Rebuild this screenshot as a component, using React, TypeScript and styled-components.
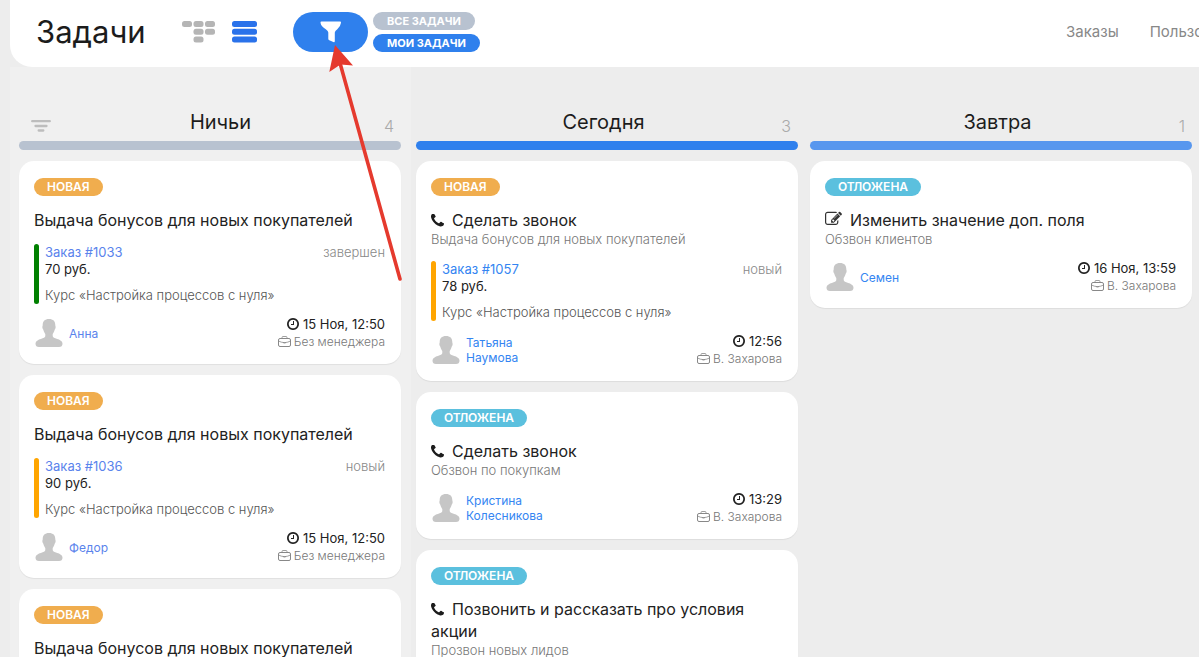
import React from 'react';
import styled, { createGlobalStyle } from 'styled-components';

const GlobalStyle = createGlobalStyle`
  * { box-sizing: border-box; }
  body {
    margin: 0;
    background: #ededed;
    color: #222;
    font-family: Inter, "Liberation Sans", sans-serif;
  }
  button { font: inherit; border: 0; padding: 0; cursor: pointer; background: none; }
  a { text-decoration: none; }
  h1, h2, h3, p { margin: 0; font-weight: 400; }
`;

const Page = styled.div`
  height: 100vh;
  overflow: hidden;
  position: relative;
  padding-left: 10px;
  display: flex;
  flex-direction: column;
`;

const Header = styled.header`
  flex: none;
  height: 67px;
  padding: 0 0 3px 26px;
  background: #fff;
  border-bottom-left-radius: 22px;
  display: flex;
  align-items: center;
  overflow: hidden;
`;

const PageTitle = styled.h1`
  width: 146px;
  font-size: 31px;
  line-height: 40px;
  color: #1c1c1c;
`;

const IconButton = styled.button<{ $gap: number }>`
  display: flex;
  margin-right: ${(p) => p.$gap}px;
`;

const FilterButton = styled.button`
  width: 75px;
  height: 40px;
  margin-right: 5px;
  border-radius: 20px;
  background: #2f80ed;
  display: flex;
  align-items: center;
  justify-content: center;
`;

const Scopes = styled.div`
  display: flex;
  flex-direction: column;
  align-items: flex-start;
  gap: 4px;
`;

const Scope = styled.button<{ $active?: boolean }>`
  height: 18px;
  padding: 0 14px;
  border-radius: 9px;
  background: ${(p) => (p.$active ? '#2f80ed' : '#b8c2d0')};
  color: #fff;
  font-size: 11px;
  font-weight: 700;
  line-height: 18px;
  white-space: nowrap;
`;

const Nav = styled.nav`
  flex: none;
  width: 133px;
  margin-left: auto;
  display: flex;
  gap: 31px;
  overflow: hidden;
`;

const NavLink = styled.a`
  flex: none;
  color: #888;
  font-size: 15px;
  line-height: 20px;
`;

const Board = styled.main`
  flex: 1;
  min-height: 0;
  display: flex;
`;

const Column = styled.section<{ $pad: string; $tint?: boolean }>`
  box-sizing: content-box;
  flex: 1 1 0;
  min-width: 0;
  padding: 0 ${(p) => p.$pad};
  background: ${(p) => (p.$tint ? '#f0f0f0' : 'transparent')};
`;

const ColumnHead = styled.header<{ $sortable?: boolean }>`
  height: 74px;
  padding: 0 7px 5px 12px;
  display: grid;
  grid-template-columns: ${(p) => (p.$sortable ? 44 : 16)}px 1fr 28px;
  align-items: end;
`;

const SortButton = styled.button`
  display: flex;
  padding-bottom: 4px;
`;

const ColumnTitle = styled.h2`
  grid-column: 2;
  font-size: 20px;
  line-height: 28px;
  text-align: center;
  color: #1c1c1c;
`;

const Count = styled.span`
  font-size: 16px;
  font-weight: 300;
  line-height: 20px;
  text-align: right;
  color: #aaa;
`;

const Rule = styled.div<{ $color: string }>`
  height: 9px;
  margin-bottom: 11px;
  border-radius: 5px;
  background: ${(p) => p.$color};
`;

const Cards = styled.div`
  display: flex;
  flex-direction: column;
  gap: 11px;
`;

const Card = styled.article`
  padding: 17px 16px 14px 15px;
  border-radius: 15px;
  background: #fff;
  box-shadow: 0 1px 1px rgba(0, 0, 0, 0.07);
`;

const Badge = styled.span<{ $color: string }>`
  display: block;
  width: fit-content;
  padding: 0 13px;
  margin-bottom: 13px;
  border-radius: 9px;
  background: ${(p) => p.$color};
  color: #fff;
  font-size: 12px;
  font-weight: 600;
  line-height: 18px;
`;

const CardTitle = styled.h3`
  font-size: 16px;
  line-height: 22px;
  color: #222;
  svg { margin-right: 8px; vertical-align: -1px; }
`;

const Subtitle = styled.p`
  font-size: 13px;
  font-weight: 300;
  line-height: 17px;
  color: #777;
`;

const Order = styled.div<{ $color: string }>`
  position: relative;
  margin-top: 13px;
  padding-left: 11px;
  height: 60px;
  &::before {
    content: '';
    position: absolute;
    left: 0;
    top: 0;
    bottom: 0;
    width: 5px;
    border-radius: 3px;
    background: ${(p) => p.$color};
  }
`;

const OrderTop = styled.div`
  display: flex;
  justify-content: space-between;
  font-size: 13px;
  line-height: 17px;
`;

const Link = styled.a<{ $soft?: boolean }>`
  color: ${(p) => (p.$soft ? '#5a83ec' : '#3485f2')};
`;

const Status = styled.span`
  font-weight: 300;
  color: #888;
`;

const Price = styled.p`
  margin-bottom: 9px;
  font-size: 13px;
  line-height: 17px;
`;

const Course = styled.p`
  font-size: 13px;
  font-weight: 300;
  line-height: 17px;
  color: #555;
`;

const Footer = styled.footer`
  margin-top: 12px;
  display: flex;
  align-items: center;
  justify-content: space-between;
`;

const Person = styled.div`
  display: flex;
  align-items: center;
  gap: 6px;
  padding-left: 1px;
  font-size: 12px;
  line-height: 15px;
  a { max-width: 90px; }
`;

const Meta = styled.div`
  text-align: right;
  font-size: 13px;
  line-height: 17px;
  svg { vertical-align: -1px; margin-right: 4px; }
`;

const Manager = styled.div`
  font-size: 12px;
  font-weight: 300;
  color: #777;
  svg { margin-right: 3px; }
`;

const Pointer = styled.svg`
  position: absolute;
  left: 320px;
  top: 40px;
  pointer-events: none;
`;

const PhoneIcon = () => (
  <svg width="13" height="13" viewBox="192 192 1408 1408" fill="#1c1c1c" aria-hidden="true">
    <path d="M1600 1240q0 27-10 70.5t-21 68.5q-21 50-122 106-94 51-186 51-27 0-53-3.5t-57-12.5-47-14.5-55.5-20.5-49.5-18q-98-35-175-83-127-79-264-216t-216-264q-48-77-83-175-3-9-18-49.5t-20.5-55.5-14.5-47-12.5-57-3.5-53q0-92 51-186 56-101 106-122 25-11 68.5-21t70.5-10q14 0 21 3 18 6 53 76 11 19 30 54t35 63.5 31 53.5q3 4 17.5 25t21.5 35.5 7 28.5q0 20-28.5 50t-62 55-62 53-28.5 46q0 9 5 22.5t8.5 20.5 14 24 11.5 19q76 137 174 235t235 174q2 1 19 11.5t24 14 20.5 8.5 22.5 5q18 0 46-28.5t53-62 55-62 50-28.5q14 0 28.5 7t35.5 21.5 25 17.5q25 15 53.5 31t63.5 35 54 30q70 35 76 53 3 7 3 21z" />
  </svg>
);

const EditIcon = () => (
  <svg width="17" height="16" viewBox="0 64 1792 1664" fill="#333" aria-hidden="true">
    <path d="M888 1184l116-116-152-152-116 116v56h96v96h56zm440-720q-16-16-33 1l-350 350q-17 17-1 33t33-1l350-350q17-17 1-33zm80 594v190q0 119-84.5 203.5t-203.5 84.5h-832q-119 0-203.5-84.5t-84.5-203.5v-832q0-119 84.5-203.5t203.5-84.5h832q63 0 117 25 15 7 18 23 3 17-9 29l-49 49q-14 14-32 8-23-6-45-6h-832q-66 0-113 47t-47 113v832q0 66 47 113t113 47h832q66 0 113-47t47-113v-126q0-13 9-22l64-64q15-15 35-7t20 29zm-96-738l288 288-672 672h-288v-288zm444 132l-92 92-288-288 92-92q28-28 68-28t68 28l152 152q28 28 28 68t-28 68z" />
  </svg>
);

const ClockIcon = () => (
  <svg width="12" height="12" viewBox="128 128 1536 1536" fill="#222" aria-hidden="true">
    <path d="M1024 544v448q0 14-9 23t-23 9h-320q-14 0-23-9t-9-23v-64q0-14 9-23t23-9h224v-352q0-14 9-23t23-9h64q14 0 23 9t9 23zm416 352q0-148-73-273t-198-198-273-73-273 73-198 198-73 273 73 273 198 198 273 73 273-73 198-198 73-273zm224 0q0 209-103 385.5t-279.5 279.5-385.5 103-385.5-103-279.5-279.5-103-385.5 103-385.5 279.5-279.5 385.5-103 385.5 103 279.5 279.5 103 385.5z" />
  </svg>
);

const CaseIcon = () => (
  <svg width="13" height="11" viewBox="0 0 13 11" fill="none" stroke="#888" aria-hidden="true">
    <rect x="0.5" y="2.5" width="12" height="8" rx="1.5" />
    <path d="M4 2.5V1.5q0-1 1-1h3q1 0 1 1v1M0.5 5q3 1.5 5 1.5h2q2 0 5-1.5M5.5 6v1h2V6" strokeWidth="0.8" />
  </svg>
);

const Avatar = () => (
  <svg width="28" height="28" viewBox="0 0 28 28" fill="#c6c6c6" aria-hidden="true">
    <path d="M14 0c4.200 0 6.300 2.200 6.300 6 0 1 .5 1.300.3 2.700-.2 1.200-.8 1.300-1 2.300-.4 2-1.300 3-1.900 3.900v2c0 1.300 1.300 1.900 3.300 2.600 3 1 6.500 2.300 6.500 5.200 0 2-1.200 3.300-3.500 3.300H4C1.700 28 .5 26.700.5 24.700c0-2.900 3.500-4.200 6.500-5.200 2-.7 3.300-1.300 3.300-2.600v-2c-.6-.9-1.500-1.900-1.900-3.900-.2-1-.8-1.100-1-2.300-.2-1.400.3-1.700.3-2.700 0-3.800 2.100-6 6.300-6z" />
  </svg>
);

const KanbanIcon = () => (
  <svg width="33" height="22" viewBox="0 0 33 22" fill="#b5b5b5" aria-hidden="true">
    <rect x="0" y="0" width="10" height="6" rx="2.500" />
    <rect x="11.500" y="0" width="10" height="6" rx="2.500" />
    <rect x="23" y="0" width="10" height="6" rx="2.500" />
    <rect x="11.500" y="7.800" width="10" height="6" rx="2.500" />
    <rect x="23" y="7.800" width="10" height="6" rx="2.500" />
    <rect x="11.500" y="15.500" width="10" height="6" rx="2.500" />
  </svg>
);

const ListIcon = () => (
  <svg width="25" height="22" viewBox="0 0 25 22" fill="#2a72ea" aria-hidden="true">
    <rect y="0" width="25" height="6" rx="2.500" />
    <rect y="7.800" width="25" height="6" rx="2.500" />
    <rect y="15.500" width="25" height="6" rx="2.500" />
  </svg>
);

const FunnelIcon = () => (
  <svg width="22" height="22" viewBox="0 0 22 22" fill="#fff" aria-hidden="true">
    <path d="M1.500.5h18.500q1.200 0 1 1.300-.5 4-3.700 6.400-2.500 1.900-2.500 3.300v8.500q0 1.600-1.500 1.100l-4-1.800q-1-.5-1-1.500v-6.300q0-1.400-2.500-3.300Q1.100 5.800.500 1.800.3.500 1.500.500z" />
  </svg>
);

const SortIcon = () => (
  <svg width="20" height="12" viewBox="0 0 20 12" stroke="#bdbdbd" strokeWidth="2.300" strokeLinecap="round" aria-hidden="true">
    <path d="M1.200 1.200h17.600M4.500 6h11M7.700 10.500h4.600" />
  </svg>
);

type Task = {
  state: 'new' | 'postponed';
  icon?: 'phone' | 'edit';
  title: string;
  subtitle?: string;
  order?: { id: string; price: string; status: string; color: string };
  person: string;
  time: string;
  manager: string;
};

const states = {
  new: { label: 'НОВАЯ', color: '#f0ad4e' },
  postponed: { label: 'ОТЛОЖЕНА', color: '#5bc0de' },
};

const bonus = 'Выдача бонусов для новых покупателей';

const columns: { title: string; count: number; color: string; pad: string; own?: boolean; tasks: Task[] }[] = [
  {
    title: 'Ничьи', count: 4, color: '#b8c2d0', pad: '10px 0 9px', own: true,
    tasks: [
      { state: 'new', title: bonus, order: { id: '1033', price: '70', status: 'завершен', color: 'green' }, person: 'Анна', time: '15 Ноя, 12:50', manager: 'Без менеджера' },
      { state: 'new', title: bonus, order: { id: '1036', price: '90', status: 'новый', color: 'orange' }, person: 'Федор', time: '15 Ноя, 12:50', manager: 'Без менеджера' },
      { state: 'new', title: bonus, person: 'Анна', time: '15 Ноя, 12:50', manager: 'Без менеджера' },
    ],
  },
  {
    title: 'Сегодня', count: 3, color: '#2f80ed', pad: '6px 0 5px',
    tasks: [
      { state: 'new', icon: 'phone', title: 'Сделать звонок', subtitle: bonus, order: { id: '1057', price: '78', status: 'новый', color: 'orange' }, person: 'Татьяна Наумова', time: '12:56', manager: 'В. Захарова' },
      { state: 'postponed', icon: 'phone', title: 'Сделать звонок', subtitle: 'Обзвон по покупкам', person: 'Кристина Колесникова', time: '13:29', manager: 'В. Захарова' },
      { state: 'postponed', icon: 'phone', title: 'Позвонить и рассказать про условия акции', subtitle: 'Прозвон новых лидов', person: 'Семен', time: '13:59', manager: 'В. Захарова' },
    ],
  },
  {
    title: 'Завтра', count: 1, color: '#5897ee', pad: '7px 0 6px',
    tasks: [
      { state: 'postponed', icon: 'edit', title: 'Изменить значение доп. поля', subtitle: 'Обзвон клиентов', person: 'Семен', time: '16 Ноя, 13:59', manager: 'В. Захарова' },
    ],
  },
];

function TaskCard({ task, soft }: { task: Task; soft?: boolean }) {
  const state = states[task.state];
  return (
    <Card>
      <Badge $color={state.color}>{state.label}</Badge>
      <CardTitle>
        {task.icon === 'phone' && <PhoneIcon />}
        {task.icon === 'edit' && <EditIcon />}
        {task.title}
      </CardTitle>
      {task.subtitle && <Subtitle>{task.subtitle}</Subtitle>}
      {task.order && (
        <Order $color={task.order.color}>
          <OrderTop>
            <Link href="#" $soft={soft}>Заказ #{task.order.id}</Link>
            <Status>{task.order.status}</Status>
          </OrderTop>
          <Price>{task.order.price} руб.</Price>
          <Course>Курс «Настройка процессов с нуля»</Course>
        </Order>
      )}
      <Footer>
        <Person>
          <Avatar />
          <Link href="#" $soft={soft}>{task.person}</Link>
        </Person>
        <Meta>
          <div><ClockIcon />{task.time}</div>
          <Manager><CaseIcon />{task.manager}</Manager>
        </Meta>
      </Footer>
    </Card>
  );
}

export default function App() {
  return (
    <Page>
      <GlobalStyle />
      <Header>
        <PageTitle>Задачи</PageTitle>
        <IconButton $gap={17} aria-label="Канбан"><KanbanIcon /></IconButton>
        <IconButton $gap={36} aria-label="Список"><ListIcon /></IconButton>
        <FilterButton aria-label="Фильтр"><FunnelIcon /></FilterButton>
        <Scopes>
          <Scope>ВСЕ ЗАДАЧИ</Scope>
          <Scope $active>МОИ ЗАДАЧИ</Scope>
        </Scopes>
        <Nav>
          <NavLink href="#">Заказы</NavLink>
          <NavLink href="#">Пользователи</NavLink>
        </Nav>
      </Header>
      <Board>
        {columns.map((c) => (
          <Column key={c.title} $pad={c.pad} $tint={c.own}>
            <ColumnHead $sortable={c.own}>
              {c.own && <SortButton aria-label="Сортировка"><SortIcon /></SortButton>}
              <ColumnTitle>{c.title}</ColumnTitle>
              <Count>{c.count}</Count>
            </ColumnHead>
            <Rule $color={c.color} />
            <Cards>
              {c.tasks.map((t, i) => <TaskCard key={i} task={t} soft={c.own} />)}
            </Cards>
          </Column>
        ))}
      </Board>
      <Pointer width="84" height="242" viewBox="320 40 84 242" aria-hidden="true">
        <path d="M340 63L400 279" stroke="#e53a2e" strokeWidth="3.600" strokeLinecap="round" />
        <path d="M335 45L353 65.500L340.500 64.500L329.300 72z" fill="#e53a2e" />
      </Pointer>
    </Page>
  );
}
